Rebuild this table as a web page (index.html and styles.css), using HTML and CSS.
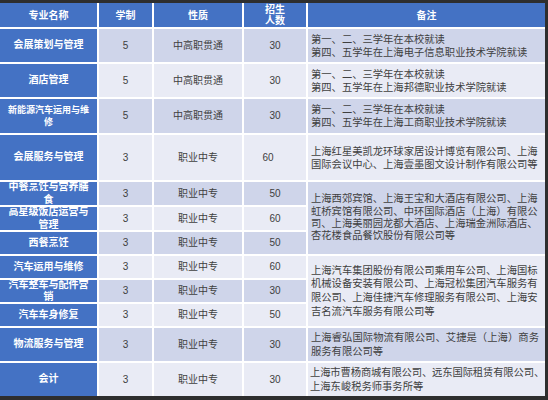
FILE: index.html
```html
<!DOCTYPE html>
<html lang="zh-CN">
<head>
<meta charset="utf-8">
<title>专业设置</title>
<link rel="stylesheet" href="styles.css">
</head>
<body>
<div class="frame">
  <div class="grid">
    <div class="cell h">专业名称</div>
    <div class="cell h">学制</div>
    <div class="cell h">性质</div>
    <div class="cell h two">招生<br>人数</div>
    <div class="cell h">备注</div>

    <div class="cell n">会展策划与管理</div>
    <div class="cell c d">5</div>
    <div class="cell c d">中高职贯通</div>
    <div class="cell c d">30</div>
    <div class="cell r d"><div><span>第一、二、三学年在本校就读</span><span>第四、五学年在上海电子信息职业技术学院就读</span></div></div>

    <div class="cell n">酒店管理</div>
    <div class="cell c l">5</div>
    <div class="cell c l">中高职贯通</div>
    <div class="cell c l">30</div>
    <div class="cell r l"><div><span>第一、二、三学年在本校就读</span><span>第四、五学年在上海邦德职业技术学院就读</span></div></div>

    <div class="cell n small">新能源汽车运用与维修</div>
    <div class="cell c d">5</div>
    <div class="cell c d">中高职贯通</div>
    <div class="cell c d">30</div>
    <div class="cell r d"><div><span>第一、二、三学年在本校就读</span><span>第四、五学年在上海工商职业技术学院就读</span></div></div>

    <div class="cell n">会展服务与管理</div>
    <div class="cell c l">3</div>
    <div class="cell c l">职业中专</div>
    <div class="cell c l shift">60</div>
    <div class="cell r l"><div><span>上海红星美凯龙环球家居设计博览有限公司、上海</span><span>国际会议中心、上海壹墨图文设计制作有限公司等</span></div></div>

    <div class="cell n">中餐烹饪与营养膳食</div>
    <div class="cell c d">3</div>
    <div class="cell c d">职业中专</div>
    <div class="cell c d">50</div>
    <div class="cell r d span3 tight"><div><span>上海西郊宾馆、上海王宝和大酒店有限公司、上海</span><span>虹桥宾馆有限公司、中环国际酒店（上海）有限公</span><span>司、上海美丽园龙都大酒店、上海瑞金洲际酒店、</span><span>杏花楼食品餐饮股份有限公司等</span></div></div>

    <div class="cell n">高星级饭店运营与管理</div>
    <div class="cell c l">3</div>
    <div class="cell c l">职业中专</div>
    <div class="cell c l">60</div>

    <div class="cell n">西餐烹饪</div>
    <div class="cell c d">3</div>
    <div class="cell c d">职业中专</div>
    <div class="cell c d">50</div>

    <div class="cell n">汽车运用与维修</div>
    <div class="cell c l">3</div>
    <div class="cell c l">职业中专</div>
    <div class="cell c l">60</div>
    <div class="cell r l span3 loose"><div><span>上海汽车集团股份有限公司乘用车公司、上海国标</span><span>机械设备安装有限公司、上海冠松集团汽车服务有</span><span>限公司、上海佳捷汽车修理服务有限公司、上海安</span><span>吉名流汽车服务有限公司等</span></div></div>

    <div class="cell n">汽车整车与配件营销</div>
    <div class="cell c d">3</div>
    <div class="cell c d">职业中专</div>
    <div class="cell c d">30</div>

    <div class="cell n">汽车车身修复</div>
    <div class="cell c l">3</div>
    <div class="cell c l">职业中专</div>
    <div class="cell c l">50</div>

    <div class="cell n">物流服务与管理</div>
    <div class="cell c d">3</div>
    <div class="cell c d">职业中专</div>
    <div class="cell c d">30</div>
    <div class="cell r d loose"><div><span class="just">上海睿弘国际物流有限公司、艾捷是（上海）商务</span><span>服务有限公司等</span></div></div>

    <div class="cell n">会计</div>
    <div class="cell c l">3</div>
    <div class="cell c l">职业中专</div>
    <div class="cell c l">30</div>
    <div class="cell r l loose edge"><div><span class="fit">上海市曹杨商城有限公司、远东国际租赁有限公司、</span><span>上海东峻税务师事务所等</span></div></div>
  </div>
</div>
</body>
</html>
```

FILE: styles.css
```css
html, body {
  margin: 0;
  padding: 0;
}

body {
  width: 548px;
  height: 400px;
  overflow: hidden;
  background: #2e2e2e;
  font-family: "Liberation Sans", "Noto Sans CJK SC", sans-serif;
}

.frame {
  padding-top: 3px;
}

.grid {
  display: grid;
  width: 545px;
  grid-template-columns: 97px 53px 88px 62px 237px;
  grid-template-rows: 24px 33px 33px 34px 45px 23px 23px 22px 22px 22px 22px 33px 33px;
  gap: 2px;
  background: #ffffff;
}

.cell {
  display: flex;
  align-items: center;
  justify-content: center;
  text-align: center;
  overflow: hidden;
  min-width: 0;
}

.h {
  background: #4472c4;
  color: #ffffff;
  font-weight: 700;
  font-size: 10px;
  line-height: 11px;
}

.n {
  background: #4472c4;
  color: #ffffff;
  font-weight: 700;
  font-size: 10px;
  line-height: 12.5px;
  padding: 0 6px;
}

.n.small {
  font-size: 9px;
  padding: 0 4px;
}

.d {
  background: #cfd5ea;
}

.l {
  background: #e9ebf5;
}

.c {
  color: #404040;
  font-size: 10px;
  line-height: 12px;
}

.c.shift {
  padding-right: 14px;
}

.r {
  justify-content: flex-start;
  text-align: left;
  padding-left: 3px;
  color: #404040;
  font-size: 10.3px;
  line-height: 13px;
  white-space: nowrap;
}

.r span {
  display: block;
}

.r .just {
  width: 228px;
  text-align: justify;
  text-align-last: justify;
  white-space: normal;
}

.r .fit {
  letter-spacing: -0.12px;
}

.r.edge {
  padding-left: 2px;
}

.r.tight {
  line-height: 12.3px;
}

.r.loose {
  line-height: 13.7px;
}

.span3 {
  grid-row: span 3;
}
```
